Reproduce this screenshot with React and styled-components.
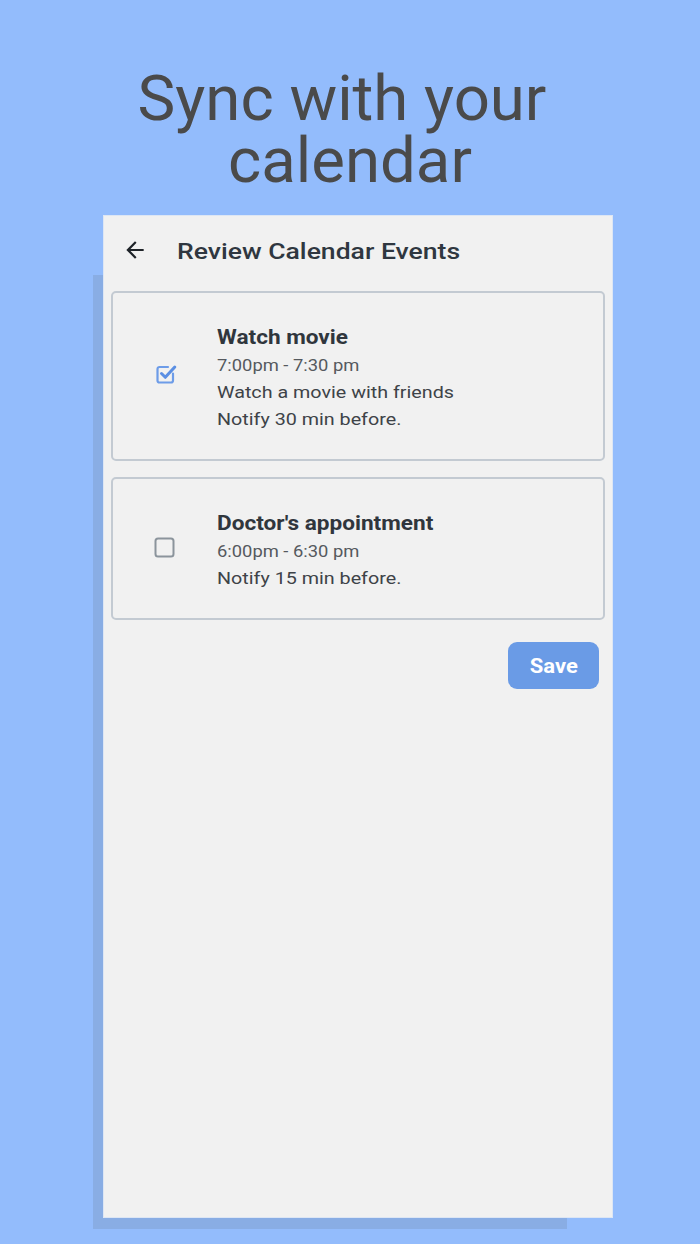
import React from "react";
import styled, { createGlobalStyle } from "styled-components";

const GlobalStyle = createGlobalStyle`
  html, body {
    margin: 0;
    padding: 0;
    background: #93bcfc;
  }
  body {
    font-family: Roboto, "Liberation Sans", sans-serif;
  }
`;

const Page = styled.div`
  width: 700px;
  height: 1244px;
  background: #93bcfc;
  display: flex;
  flex-direction: column;
  align-items: flex-start;
  overflow: hidden;
`;

const Headline = styled.h1`
  width: 100%;
  margin: 0;
  padding-top: 68px;
  height: 215px;
  box-sizing: border-box;
  display: flex;
  flex-direction: column;
  align-items: center;
  font-family: Roboto, "Liberation Sans", sans-serif;
  font-weight: 400;
  font-size: 63.5px;
  line-height: 62px;
  color: #4a4a4a;
`;

const HeadLine = styled.span`
  display: block;
  margin-left: ${(p) => p.shift}px;
`;

const PhoneWrap = styled.div`
  position: relative;
  margin-left: 103px;
  width: 510px;
  height: 1003px;

  &::before {
    content: "";
    position: absolute;
    left: -10px;
    top: 60px;
    width: 474px;
    height: 954px;
    background: #89ade4;
  }
`;

const Phone = styled.div`
  position: relative;
  width: 100%;
  height: 100%;
  box-sizing: border-box;
  background: #f1f1f1;
  border: 1px solid #dde6f4;
  display: flex;
  flex-direction: column;
`;

const Toolbar = styled.div`
  height: 70px;
  display: flex;
  align-items: center;
  padding-left: 18px;
  box-sizing: border-box;
`;

const BackButton = styled.div`
  width: 26px;
  height: 26px;
  display: flex;
  align-items: center;
  justify-content: center;
  margin-right: 29px;
  margin-top: -2px;
`;

const Stretch = styled.span`
  display: inline-block;
  transform: scaleX(${(p) => p.sx || 1.15});
  transform-origin: ${(p) => (p.center ? "center" : "left center")};
  white-space: nowrap;
`;

const ToolbarTitle = styled.div`
  font-size: 22.5px;
  font-weight: 500;
  color: #2f3740;
`;

const List = styled.div`
  display: flex;
  flex-direction: column;
  gap: 16px;
  padding: 5px 7px 0 7px;
`;

const Card = styled.div`
  height: ${(p) => p.h}px;
  box-sizing: border-box;
  border: 2px solid #c3cad2;
  border-radius: 5px;
  display: flex;
  align-items: center;
  padding-left: 41px;
`;

const Check = styled.div`
  width: 26px;
  height: 26px;
  display: flex;
  align-items: center;
  justify-content: center;
  margin-right: 37px;
  margin-top: ${(p) => p.offset}px;
`;

const Body = styled.div`
  display: flex;
  flex-direction: column;
  padding-top: 4px;
`;

const EventTitle = styled.div`
  font-size: 20px;
  font-weight: 700;
  color: #30363d;
  line-height: 27px;
  margin-bottom: 1px;
`;

const Line = styled.div`
  font-size: 17px;
  color: ${(p) => (p.muted ? "#55595e" : "#3e4348")};
  line-height: 27px;
`;

const Footer = styled.div`
  display: flex;
  justify-content: flex-end;
  padding: 22px 13px 0 0;
`;

const SaveButton = styled.button`
  width: 91px;
  height: 47px;
  border: none;
  border-radius: 9px;
  background: #6a9be6;
  color: #ffffff;
  font-family: Roboto, "Liberation Sans", sans-serif;
  font-size: 20px;
  font-weight: 700;
  display: flex;
  align-items: center;
  justify-content: center;
  padding: 0;
`;

const ArrowBack = () => (
  <svg width="26" height="26" viewBox="0 0 24 24">
    <path
      d="M20 11H7.83l5.59-5.59L12 4l-8 8 8 8 1.41-1.41L7.83 13H20v-2z"
      fill="#1e2328"
    />
  </svg>
);

const Checked = () => (
  <svg width="26" height="26" viewBox="0 0 26 26">
    <path
      d="M19 12.5 V19.5 a2 2 0 0 1 -2 2 H5.5 a2 2 0 0 1 -2 -2 V8 a2 2 0 0 1 2 -2 H14"
      fill="none"
      stroke="#6d9ce8"
      strokeWidth="2.2"
      strokeLinecap="round"
    />
    <path
      d="M7.5 12.5 L11.3 16.3 L20.8 6"
      fill="none"
      stroke="#5b8fe3"
      strokeWidth="3"
      strokeLinecap="round"
      strokeLinejoin="round"
    />
  </svg>
);

const Unchecked = () => (
  <svg width="26" height="26" viewBox="0 0 26 26">
    <rect
      x="1.5"
      y="3.5"
      width="18"
      height="18"
      rx="2.5"
      fill="none"
      stroke="#8b949c"
      strokeWidth="2"
    />
  </svg>
);

const EventCard = ({ checked, title, time, lines, h, offset }) => (
  <Card h={h}>
    <Check offset={offset}>{checked ? <Checked /> : <Unchecked />}</Check>
    <Body>
      <EventTitle>
        <Stretch sx={1.13}>{title}</Stretch>
      </EventTitle>
      <Line muted>
        <Stretch sx={1.08}>{time}</Stretch>
      </Line>
      {lines.map((l) => (
        <Line key={l}>
          <Stretch sx={1.16}>{l}</Stretch>
        </Line>
      ))}
    </Body>
  </Card>
);

const App = () => {
  return (
    <Page>
      <GlobalStyle />
      <Headline>
        <HeadLine shift={-16}>Sync with your</HeadLine>
        <HeadLine shift={0}>calendar</HeadLine>
      </Headline>
      <PhoneWrap>
        <Phone>
          <Toolbar>
            <BackButton>
              <ArrowBack />
            </BackButton>
            <ToolbarTitle>
              <Stretch sx={1.18}>Review Calendar Events</Stretch>
            </ToolbarTitle>
          </Toolbar>
          <List>
            <EventCard
              checked
              h={170}
              offset={-4}
              title="Watch movie"
              time="7:00pm - 7:30 pm"
              lines={["Watch a movie with friends", "Notify 30 min before."]}
            />
            <EventCard
              h={143}
              offset={-2}
              title="Doctor's appointment"
              time="6:00pm - 6:30 pm"
              lines={["Notify 15 min before."]}
            />
          </List>
          <Footer>
            <SaveButton>
              <Stretch sx={1.1} center>
                Save
              </Stretch>
            </SaveButton>
          </Footer>
        </Phone>
      </PhoneWrap>
    </Page>
  );
};

export default App;
